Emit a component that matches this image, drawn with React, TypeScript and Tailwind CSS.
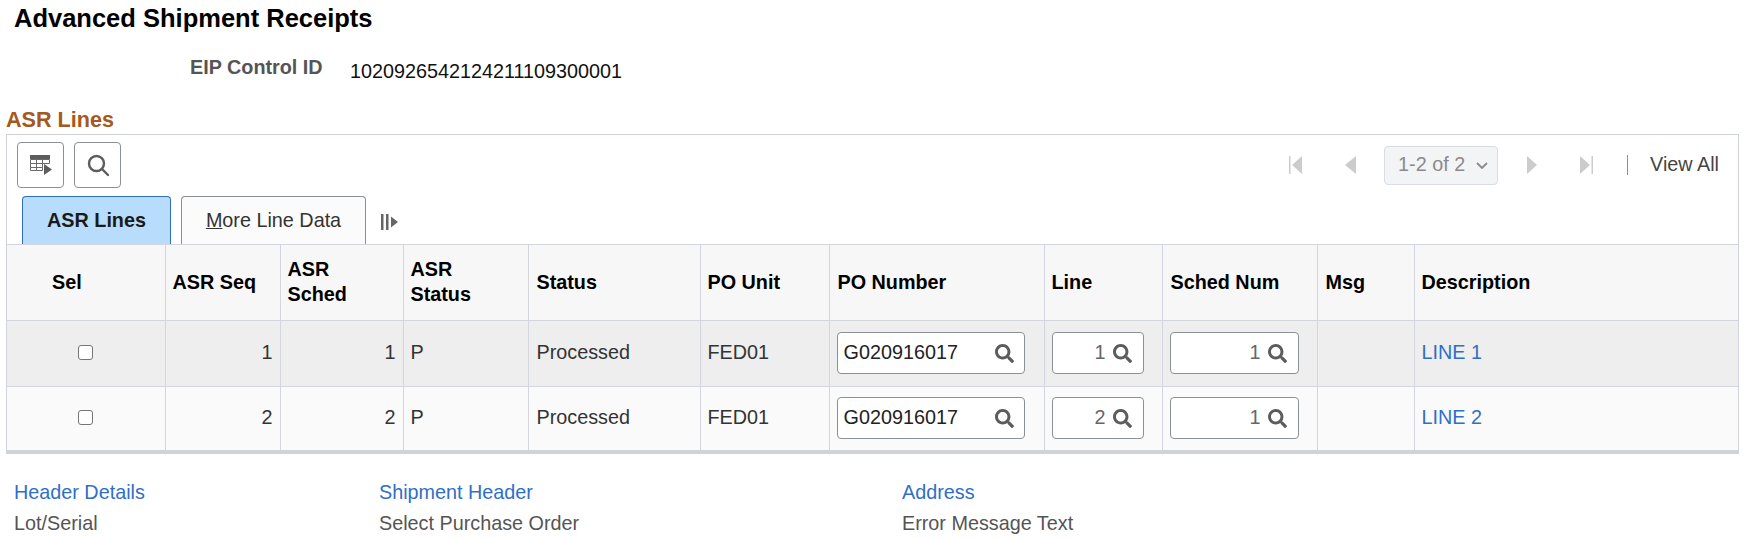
import { FaSearch } from 'react-icons/fa';

const rows = [
  { seq: '1', line: '1', link: 'LINE 1', bg: 'bg-[#eeeeee]' },
  { seq: '2', line: '2', link: 'LINE 2', bg: 'bg-[#fafafa]' },
];

const th = 'border-r border-[#d3d6de] px-[7px] text-left align-middle text-[19.8px] font-bold leading-[25px] text-black';
const td = 'border-r border-[#d3d6de] px-[7px] pb-[1px] text-[19.8px] text-[#333333]';

function PromptInput({ value, width, right }: { value: string; width: string; right?: boolean }) {
  return (
    <div className={`flex h-[42px] items-center rounded-[4px] border border-[#8a9096] bg-white ${width} ${right ? 'pr-[11px]' : 'pl-[6px] pr-[10px]'}`}>
      <span className={`flex-1 text-[19.8px] text-[#222222] ${right ? 'text-right text-[#666666]' : ''}`}>{value}</span>
      <FaSearch className={`h-[19px] w-[19px] text-[#5c5c5c] ${right ? 'ml-[7px]' : ''}`} />
    </div>
  );
}

function PagerIcon({ d, width }: { d: string; width: number }) {
  return (
    <svg width={width} height="18" viewBox={`0 0 ${width} 18`} fill="#cccccc">
      <path d={d} />
    </svg>
  );
}

export default function App() {
  return (
    <div className="h-[538px] w-[1748px] overflow-hidden bg-white font-['Liberation_Sans',Arial,sans-serif]">
      <h1 className="h-9 pl-[14px] text-[25.5px] font-bold leading-9 text-black">Advanced Shipment Receipts</h1>

      <div className="mt-5 flex pl-[190px]">
        <div className="w-[160px] text-[19.8px] font-bold leading-[22px] text-[#555555]">EIP Control ID</div>
        <div className="mt-1 text-[19.8px] leading-[22px] text-[#111111]">1020926542124211109300001</div>
      </div>

      <h2 className="mt-[26px] pl-[6px] text-[21.6px] font-bold leading-6 text-[#a5591c]">ASR Lines</h2>

      <div className="mt-[2px] ml-[6px] w-[1733px] border border-[#d0d3dc]">
        <div className="flex items-center justify-between pl-[10px] pr-[19px] pt-[7px]">
          <div className="flex gap-[10px]">
            <button className="flex h-[46px] w-[47px] items-center justify-center rounded-[4px] border border-[#8a9096] bg-white">
              <svg width="24" height="22" viewBox="0 0 24 22">
                <path d="M1 1h20v4H1z" fill="#5c5c5c" />
                <path d="M1.5 5.5h6v4h-6zM7.5 5.5h6v4h-6zM13.5 5.5h7v4h-7zM1.5 9.5h6v4h-6zM7.5 9.5h6v4h-6zM1.5 13.5h6v3h-6zM7.5 13.5h6v3h-6z" fill="none" stroke="#6a6a6a" strokeWidth="1" />
                <path d="M15 10l8 5.5-8 5.5z" fill="#5c5c5c" />
              </svg>
            </button>
            <button className="flex h-[46px] w-[47px] items-center justify-center rounded-[4px] border border-[#8a9096] bg-white">
              <svg width="24" height="24" viewBox="0 0 24 24" fill="none" stroke="#5c5c5c" strokeWidth="2.4" strokeLinecap="round">
                <circle cx="10.5" cy="10.5" r="7.5" />
                <path d="M16 16l6 6" />
              </svg>
            </button>
          </div>

          <div className="flex items-center text-[19.8px]">
            <PagerIcon width={13} d="M0 0h1.5v18H0zM13 0v18L3 9z" />
            <div className="ml-[43px]">
              <PagerIcon width={11} d="M11 0v18L0 9z" />
            </div>
            <div className="ml-[28px] flex h-[39px] w-[114px] items-center justify-between rounded-[4px] border border-[#d9dce1] bg-[#f3f4f6] pl-[13px] pr-[7px] text-[#8a8a8a]">
              <span>1-2 of 2</span>
              <svg width="16" height="16" viewBox="0 0 16 16" fill="none" stroke="#8a8a8a" strokeWidth="1.8">
                <path d="M3 6l5 5 5-5" />
              </svg>
            </div>
            <div className="ml-[29px]">
              <PagerIcon width={10} d="M0 0v18L10 9z" />
            </div>
            <div className="ml-[43px]">
              <PagerIcon width={13} d="M0 0v18L10 9zM11.5 0H13v18h-1.5z" />
            </div>
            <div className="ml-[34px] h-5 w-px bg-[#6f94c8]" />
            <a className="ml-[22px] text-[#444444]">View All</a>
          </div>
        </div>

        <div className="mt-2 flex items-end pl-[15px]">
          <div className="flex h-12 w-[149px] items-center justify-center rounded-t-[4px] border border-b-0 border-[#2f6fb5] bg-[#b8dcfb] text-[19.8px] font-bold text-[#1a1a1a]">
            ASR Lines
          </div>
          <div className="ml-[10px] flex h-12 w-[185px] items-center justify-center rounded-t-[4px] border border-b-0 border-[#8a9096] bg-[#fbfbfb] text-[19.8px] text-[#333333]">
            <span><span className="underline">M</span>ore Line Data</span>
          </div>
          <svg className="mb-[13px] ml-[15px]" width="18" height="18" viewBox="0 0 18 18" fill="#666666">
            <path d="M0 1h2.5v16H0zM5 1h2.5v16H5zM10 3.5l7 5.5-7 5.5z" />
          </svg>
        </div>

        <table className="w-[1731px] table-fixed border-collapse">
          <colgroup>
            <col className="w-[158px]" />
            <col className="w-[115px]" />
            <col className="w-[123px]" />
            <col className="w-[125px]" />
            <col className="w-[172px]" />
            <col className="w-[129px]" />
            <col className="w-[215px]" />
            <col className="w-[118px]" />
            <col className="w-[155px]" />
            <col className="w-[97px]" />
            <col />
          </colgroup>
          <thead>
            <tr className="h-[76px] border-y border-[#d3d6de] bg-[#f7f7f7]">
              <th className={`${th} pl-[45px]`}>Sel</th>
              <th className={th}>ASR Seq</th>
              <th className={`${th} pb-[2px]`}>ASR<br />Sched</th>
              <th className={`${th} pb-[2px]`}>ASR<br />Status</th>
              <th className={`${th} pl-[8px]`}>Status</th>
              <th className={th}>PO Unit</th>
              <th className={`${th} pl-[8px]`}>PO Number</th>
              <th className={th}>Line</th>
              <th className={`${th} pl-[8px]`}>Sched Num</th>
              <th className={`${th} pl-[8px]`}>Msg</th>
              <th className={`${th} border-r-0`}>Description</th>
            </tr>
          </thead>
          <tbody>
            {rows.map((row) => (
              <tr key={row.seq} className={`h-[66px] border-b border-[#d3d6de] last:h-[65px] last:border-b-[3px] last:border-b-[#cfd2d6] ${row.bg}`}>
                <td className={`${td} pb-[3px] text-center`}>
                  <input type="checkbox" className="h-[15px] w-[15px] appearance-none rounded-[3px] border border-[#767676] bg-white align-middle" />
                </td>
                <td className={`${td} pr-[7px] text-right`}>{row.seq}</td>
                <td className={`${td} pr-[7px] text-right`}>{row.seq}</td>
                <td className={td}>P</td>
                <td className={`${td} pl-[8px]`}>Processed</td>
                <td className={td}>FED01</td>
                <td className={td}>
                  <PromptInput value="G020916017" width="w-[188px]" />
                </td>
                <td className={td}>
                  <PromptInput value={row.line} width="w-[92px]" right />
                </td>
                <td className={td}>
                  <PromptInput value="1" width="w-[129px]" right />
                </td>
                <td className={td} />
                <td className={`${td} border-r-0`}>
                  <a className="text-[#2f6fc6]">{row.link}</a>
                </td>
              </tr>
            ))}
          </tbody>
        </table>
      </div>

      <div className="mt-[27px] grid grid-cols-[365px_523px_1fr] gap-y-[9px] pl-[14px] text-[19.8px] leading-[22px]">
        <a className="text-[#2f6fc6]">Header Details</a>
        <a className="text-[#2f6fc6]">Shipment Header</a>
        <a className="text-[#2f6fc6]">Address</a>
        <span className="text-[#555555]">Lot/Serial</span>
        <span className="text-[#555555]">Select Purchase Order</span>
        <span className="text-[#555555]">Error Message Text</span>
      </div>
    </div>
  );
}
